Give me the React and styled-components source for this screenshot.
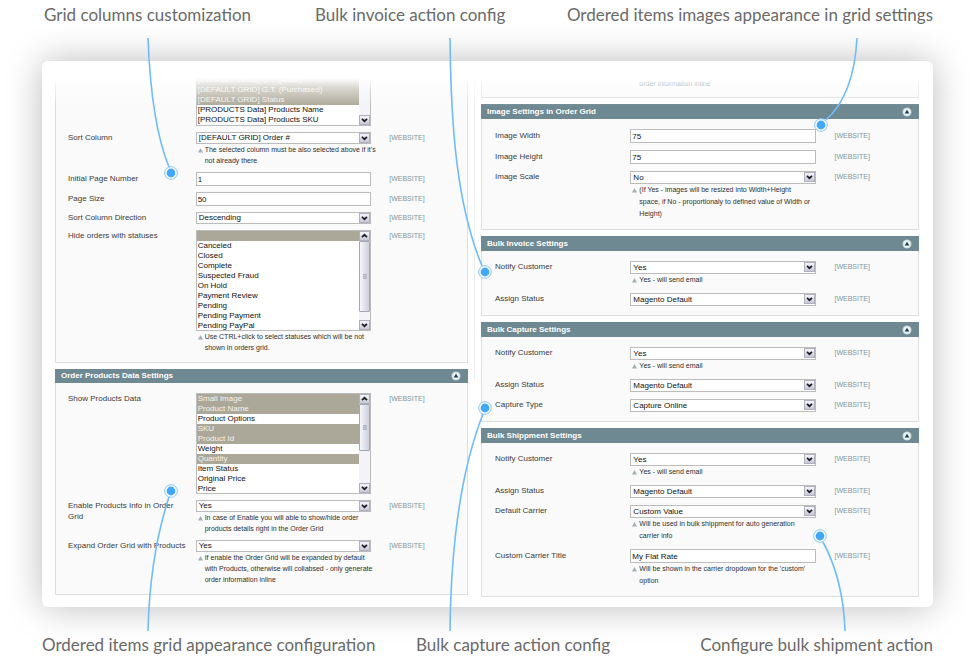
import React, { useId } from "react";
import styled, { createGlobalStyle, css } from "styled-components";

const GlobalStyle = createGlobalStyle`
  *, *::before, *::after { box-sizing: border-box; }
  html { background: #fff; }
  body { margin: 0; font-family: "Liberation Sans", Arial, sans-serif; color: #2f2f2f; }
`;

const Page = styled.main`
  position: relative;
  min-width: 720px;
  overflow: hidden;
`;

const Captions = styled.div`
  display: grid;
  grid-template-columns: ${(p) => p.$columns};
  padding: ${(p) => p.$padding};
`;

const Caption = styled.h2`
  margin: 0;
  font: 400 17px/22px Lato, "Open Sans", sans-serif;
  color: #6a6a6a;
  white-space: nowrap;

  &:last-child { justify-self: end; }
`;

const Card = styled.div`
  margin: 0 39px 0 42px;
  padding: 17px 14px 10px 13px;
  border-radius: 6px;
  background: #fff;
  box-shadow: 0 0 36px rgba(0, 0, 0, 0.27);
`;

const Columns = styled.div`
  position: relative;
  display: grid;
  grid-template-columns: 413fr 1px 438fr;
  column-gap: 6px;
  align-items: start;
`;

const TopFade = styled.div`
  position: absolute;
  inset: 0 0 auto;
  height: 28px;
  background: linear-gradient(#fff, rgba(255, 255, 255, 0.55) 35%, rgba(255, 255, 255, 0));
  pointer-events: none;
`;

const Divider = styled.div`
  height: 302px;
  background: #edf0f2;
`;

const Column = styled.div`
  display: flex;
  flex-direction: column;
  gap: 6px;
  --row-gap: ${(p) => (p.$wide ? 7 : 6)}px;
  --select-height: ${(p) => (p.$wide ? 13 : 12)}px;
  --line: ${(p) => (p.$wide ? 12 : 11)}px;
  --header-height: ${(p) => (p.$wide ? 15 : 14)}px;
  --indent: ${(p) => (p.$wide ? 13 : 12)}px;
`;

const PanelHeader = styled.header`
  display: flex;
  align-items: center;
  justify-content: space-between;
  height: var(--header-height);
  padding: 0 7px 0 6px;
  background: #6f8992;
`;

const PanelTitle = styled.h3`
  margin: 0;
  font-size: 8px;
  line-height: 12px;
  font-weight: 700;
  color: #fff;
`;

const CollapseButton = styled.button`
  display: flex;
  padding: 0;
  border: 0;
  background: none;
  cursor: pointer;
`;

const PanelBody = styled.div`
  display: flex;
  flex-direction: column;
  gap: var(--row-gap);
  padding: ${(p) => (p.$cut ? "0" : "10px")} 0 9px var(--indent);
  border: 1px solid #dcdedf;
  border-top: 0;
  background: #fafafa;
`;

const Row = styled.div`
  display: grid;
  grid-template-columns: 32% 44% 1fr;
  align-items: start;
`;

const CutRow = styled(Row)`
  height: ${(p) => p.$height}px;
  align-items: end;
  overflow: hidden;
`;

const firstLine = css`
  padding-top: ${(p) => (p.$tall ? 1 : 0)}px;
  line-height: var(--line);
`;

const Label = styled.label`
  ${firstLine}
  font-size: 8px;
  color: #3a3a3a;
  padding-right: 8px;
`;

const Scope = styled.span`
  ${firstLine}
  padding-left: 18px;
  font-size: 7px;
  color: #7f979f;
`;

const Control = styled.div`
  grid-column: 2;
  min-width: 0;
`;

const TextInput = styled.input`
  display: block;
  width: 100%;
  height: 14px;
  padding: 0 1px;
  border: 1px solid #bcbcbc;
  border-radius: 0;
  background: #fff;
  font: 8px/12px "Liberation Sans", Arial, sans-serif;
  color: #111;
`;

const SelectFrame = styled.div`
  display: grid;
  height: var(--select-height);
  border: 1px solid #bcbcbc;
  background: #fff;

  > * { grid-area: 1 / 1; }
  > svg { justify-self: end; pointer-events: none; }
`;

const SelectInput = styled.select`
  appearance: none;
  width: 100%;
  height: 100%;
  padding: 0 12px 0 2px;
  border: 0;
  background: none;
  font: 8px/10px "Liberation Sans", Arial, sans-serif;
  color: #111;
`;

const ListFrame = styled.div`
  display: flex;
  align-items: ${(p) => (p.$cut ? "flex-end" : "flex-start")};
  height: ${(p) => (p.$cut ? 48 : 101)}px;
  overflow: hidden;
  border: 1px solid #bcbcbc;
  border-top-width: ${(p) => (p.$cut ? 0 : 1)}px;
  background: #fff;
`;

const ListInput = styled.select`
  appearance: none;
  flex: 1;
  min-width: 0;
  height: ${(p) => p.size * 10}px;
  padding: 0;
  border: 0;
  border-radius: 0;
  outline: 0;
  overflow: hidden;
  background: #fff;
  font: 8px/10px "Liberation Sans", Arial, sans-serif;
  color: #111;
  scrollbar-width: none;

  option {
    height: 10px;
    min-height: 10px;
    padding: 0 1px;
    line-height: 10px;
    color: #111;
  }

  option:checked {
    background: #aca899 linear-gradient(#aca899, #aca899);
    color: #f4f2ea;
  }
`;

const ScrollTrack = styled.div`
  display: flex;
  flex-direction: column;
  justify-content: space-between;
  width: 11px;
  height: 100%;
  background: #f3f3f8;
`;

const ScrollRail = styled.div`
  flex: 1;
`;

const ScrollThumb = styled.div`
  display: grid;
  place-items: center;
  height: ${(p) => p.$size}%;
  border: 1px solid #a5a5b3;
  border-radius: 1px;
  background: linear-gradient(90deg, #f6f6fb, #cfcfde);

  &::after {
    content: "";
    width: 4px;
    height: 5px;
    background: repeating-linear-gradient(#b3b3c2 0 1px, #c6c6d3 1px 2px);
  }
`;

const Hint = styled.p`
  display: flex;
  gap: 2px;
  margin: 0;
  padding-left: ${(p) => (p.$continued ? 9 : 2)}px;
  font-size: 7px;
  line-height: var(--line);
  white-space: pre;
  color: #2f2f2f;

  svg { flex: none; margin-top: 4px; }
`;

const Connectors = styled.svg`
  position: absolute;
  top: 0;
  left: 0;
  width: 100%;
  height: auto;
  pointer-events: none;
`;

function ArrowBox({ up }) {
  return (
    <svg width="11" height="10" viewBox="0 0 11 10" aria-hidden="true">
      <defs>
        <linearGradient id="arrow-face" x1="0" y1="0" x2="0" y2="1">
          <stop offset="0" stopColor="#f8f8fd" />
          <stop offset="1" stopColor="#c6c6d6" />
        </linearGradient>
      </defs>
      <rect x="0.5" y="0.5" width="10" height="9" fill="url(#arrow-face)" stroke="#b0b0bd" />
      <path
        d={up ? "M3 6.2 5.5 3.8 8 6.2" : "M3 3.8 5.5 6.2 8 3.8"}
        fill="none"
        stroke="#1c1c22"
        strokeWidth="1.7"
      />
    </svg>
  );
}

function HintMark() {
  return (
    <svg width="5" height="5" viewBox="0 0 5 5" aria-hidden="true">
      <path d="M2.5 0 5 4.5H0Z" fill="#9fb0b6" />
    </svg>
  );
}

function CollapseIcon() {
  return (
    <svg width="10" height="10" viewBox="0 0 10 10" aria-hidden="true">
      <circle cx="5" cy="5" r="4.6" fill="#b9cbd0" />
      <circle cx="5" cy="5" r="3.7" fill="#e9f1f3" />
      <path d="M5 2.7 7.3 6.6H2.7Z" fill="#163f4c" />
    </svg>
  );
}

function SelectBox({ id, value }) {
  return (
    <SelectFrame>
      <SelectInput id={id} defaultValue={value}>
        <option>{value}</option>
      </SelectInput>
      <ArrowBox />
    </SelectFrame>
  );
}

function ListBox({ id, label, items, selected, thumb, cut }) {
  return (
    <ListFrame $cut={cut}>
      <ListInput id={id} aria-label={label} multiple size={items.length} defaultValue={selected}>
        {items.map((item) => (
          <option key={item} value={item}>{item || "\u00a0"}</option>
        ))}
      </ListInput>
      <ScrollTrack aria-hidden="true">
        {!cut && <ArrowBox up />}
        <ScrollRail>{thumb && <ScrollThumb $size={thumb} />}</ScrollRail>
        <ArrowBox />
      </ScrollTrack>
    </ListFrame>
  );
}

function Field({ label, type = "select", hint, ...rest }) {
  const id = useId();
  const tall = type === "text";
  return (
    <Row>
      <Label htmlFor={id} $tall={tall}>{label}</Label>
      <Control>
        {type === "text" && <TextInput id={id} type="text" defaultValue={rest.value} />}
        {type === "select" && <SelectBox id={id} value={rest.value} />}
        {type === "list" && <ListBox id={id} {...rest} />}
        {hint && <Hint><HintMark /><span>{hint}</span></Hint>}
      </Control>
      <Scope $tall={tall}>[WEBSITE]</Scope>
    </Row>
  );
}

function Panel({ title, children }) {
  return (
    <section>
      <PanelHeader>
        <PanelTitle>{title}</PanelTitle>
        <CollapseButton type="button" aria-label={`Collapse ${title}`}>
          <CollapseIcon />
        </CollapseButton>
      </PanelHeader>
      <PanelBody>{children}</PanelBody>
    </section>
  );
}

const gridColumns = [
  "[DEFAULT GRID] G.T. (Base)",
  "[DEFAULT GRID] G.T. (Purchased)",
  "[DEFAULT GRID] Status",
  "[PRODUCTS Data] Products Name",
  "[PRODUCTS Data] Products SKU",
];

const statuses = [
  "", "Canceled", "Closed", "Complete", "Suspected Fraud", "On Hold",
  "Payment Review", "Pending", "Pending Payment", "Pending PayPal",
];

const productData = [
  "Small Image", "Product Name", "Product Options", "SKU", "Product Id",
  "Weight", "Quantity", "Item Status", "Original Price", "Price",
];

const pointers = [
  { d: "M148 38C150 90 157 138 169 167", x: 171, y: 173 },
  { d: "M450 38C451 130 457 205 482 266", x: 485, y: 272 },
  { d: "M857 38C855 75 846 102 826 120", x: 821, y: 125 },
  { d: "M148 631C149 590 155 540 169 497", x: 171, y: 491 },
  { d: "M450 631C451 540 461 470 483 414", x: 485, y: 408 },
  { d: "M845 631C844 600 837 568 823 542", x: 820, y: 536 },
];

export default function App() {
  return (
    <Page>
      <GlobalStyle />
      <Captions $columns="271px 244px 1fr" $padding="4px 39px 35px 44px">
        <Caption>Grid columns customization</Caption>
        <Caption>Bulk invoice action config</Caption>
        <Caption>Ordered items images appearance in grid settings</Caption>
      </Captions>

      <Card>
        <Columns>
          <Column>
            <PanelBody $cut>
              <CutRow $height={48}>
                <Control>
                  <ListBox
                    cut
                    label="Grid columns"
                    items={gridColumns}
                    selected={gridColumns.slice(0, 3)}
                  />
                </Control>
              </CutRow>
              <Field
                label="Sort Column"
                value="[DEFAULT GRID] Order #"
                hint={"The selected column must be also selected above if it's\nnot already there"}
              />
              <Field label="Initial Page Number" type="text" value="1" />
              <Field label="Page Size" type="text" value="50" />
              <Field label="Sort Column Direction" value="Descending" />
              <Field
                label="Hide orders with statuses"
                type="list"
                items={statuses}
                selected={[""]}
                thumb={90}
                hint={"Use CTRL+click to select statuses which will be not\nshown in orders grid."}
              />
            </PanelBody>

            <Panel title="Order Products Data Settings">
              <Field
                label="Show Products Data"
                type="list"
                items={productData}
                selected={["Small Image", "Product Name", "SKU", "Product Id", "Quantity"]}
                thumb={59}
              />
              <Field
                label="Enable Products Info in Order Grid"
                value="Yes"
                hint={"In case of Enable you will able to show/hide order\nproducts details right in the Order Grid"}
              />
              <Field
                label="Expand Order Grid with Products"
                value="Yes"
                hint={"If enable the Order Grid will be expanded by default\nwith Products, otherwise will collabsed - only generate\norder information inline"}
              />
            </Panel>
          </Column>

          <Divider />

          <Column $wide>
            <PanelBody $cut>
              <CutRow $height={10}>
                <Control>
                  <Hint $continued>order information inline</Hint>
                </Control>
              </CutRow>
            </PanelBody>

            <Panel title="Image Settings in Order Grid">
              <Field label="Image Width" type="text" value="75" />
              <Field label="Image Height" type="text" value="75" />
              <Field
                label="Image Scale"
                value="No"
                hint={"(If Yes - images will be resized into Width+Height\nspace, if No - proportionaly to defined value of Width or\nHeight)"}
              />
            </Panel>

            <Panel title="Bulk Invoice Settings">
              <Field label="Notify Customer" value="Yes" hint="Yes - will send email" />
              <Field label="Assign Status" value="Magento Default" />
            </Panel>

            <Panel title="Bulk Capture Settings">
              <Field label="Notify Customer" value="Yes" hint="Yes - will send email" />
              <Field label="Assign Status" value="Magento Default" />
              <Field label="Capture Type" value="Capture Online" />
            </Panel>

            <Panel title="Bulk Shippment Settings">
              <Field label="Notify Customer" value="Yes" hint="Yes - will send email" />
              <Field label="Assign Status" value="Magento Default" />
              <Field
                label="Default Carrier"
                value="Custom Value"
                hint={"Will be used in bulk shippment for auto generation\ncarrier info"}
              />
              <Field
                label="Custom Carrier Title"
                type="text"
                value="My Flat Rate"
                hint={"Will be shown in the carrier dropdown for the 'custom'\noption"}
              />
            </Panel>
          </Column>
          <TopFade />
        </Columns>
      </Card>

      <Captions $columns="374px 279px 1fr" $padding="27px 39px 0 42px">
        <Caption>Ordered items grid appearance configuration</Caption>
        <Caption>Bulk capture action config</Caption>
        <Caption>Configure bulk shipment action</Caption>
      </Captions>

      <Connectors viewBox="0 0 972 657" aria-hidden="true">
        {pointers.map(({ d, x, y }) => (
          <g key={d}>
            <path d={d} fill="none" stroke="#6fbcfb" strokeWidth="1.6" />
            <circle cx={x} cy={y} r="6.3" fill="#fff" stroke="#84c6fb" />
            <circle cx={x} cy={y} r="4.4" fill="#42a8fa" />
          </g>
        ))}
      </Connectors>
    </Page>
  );
}
